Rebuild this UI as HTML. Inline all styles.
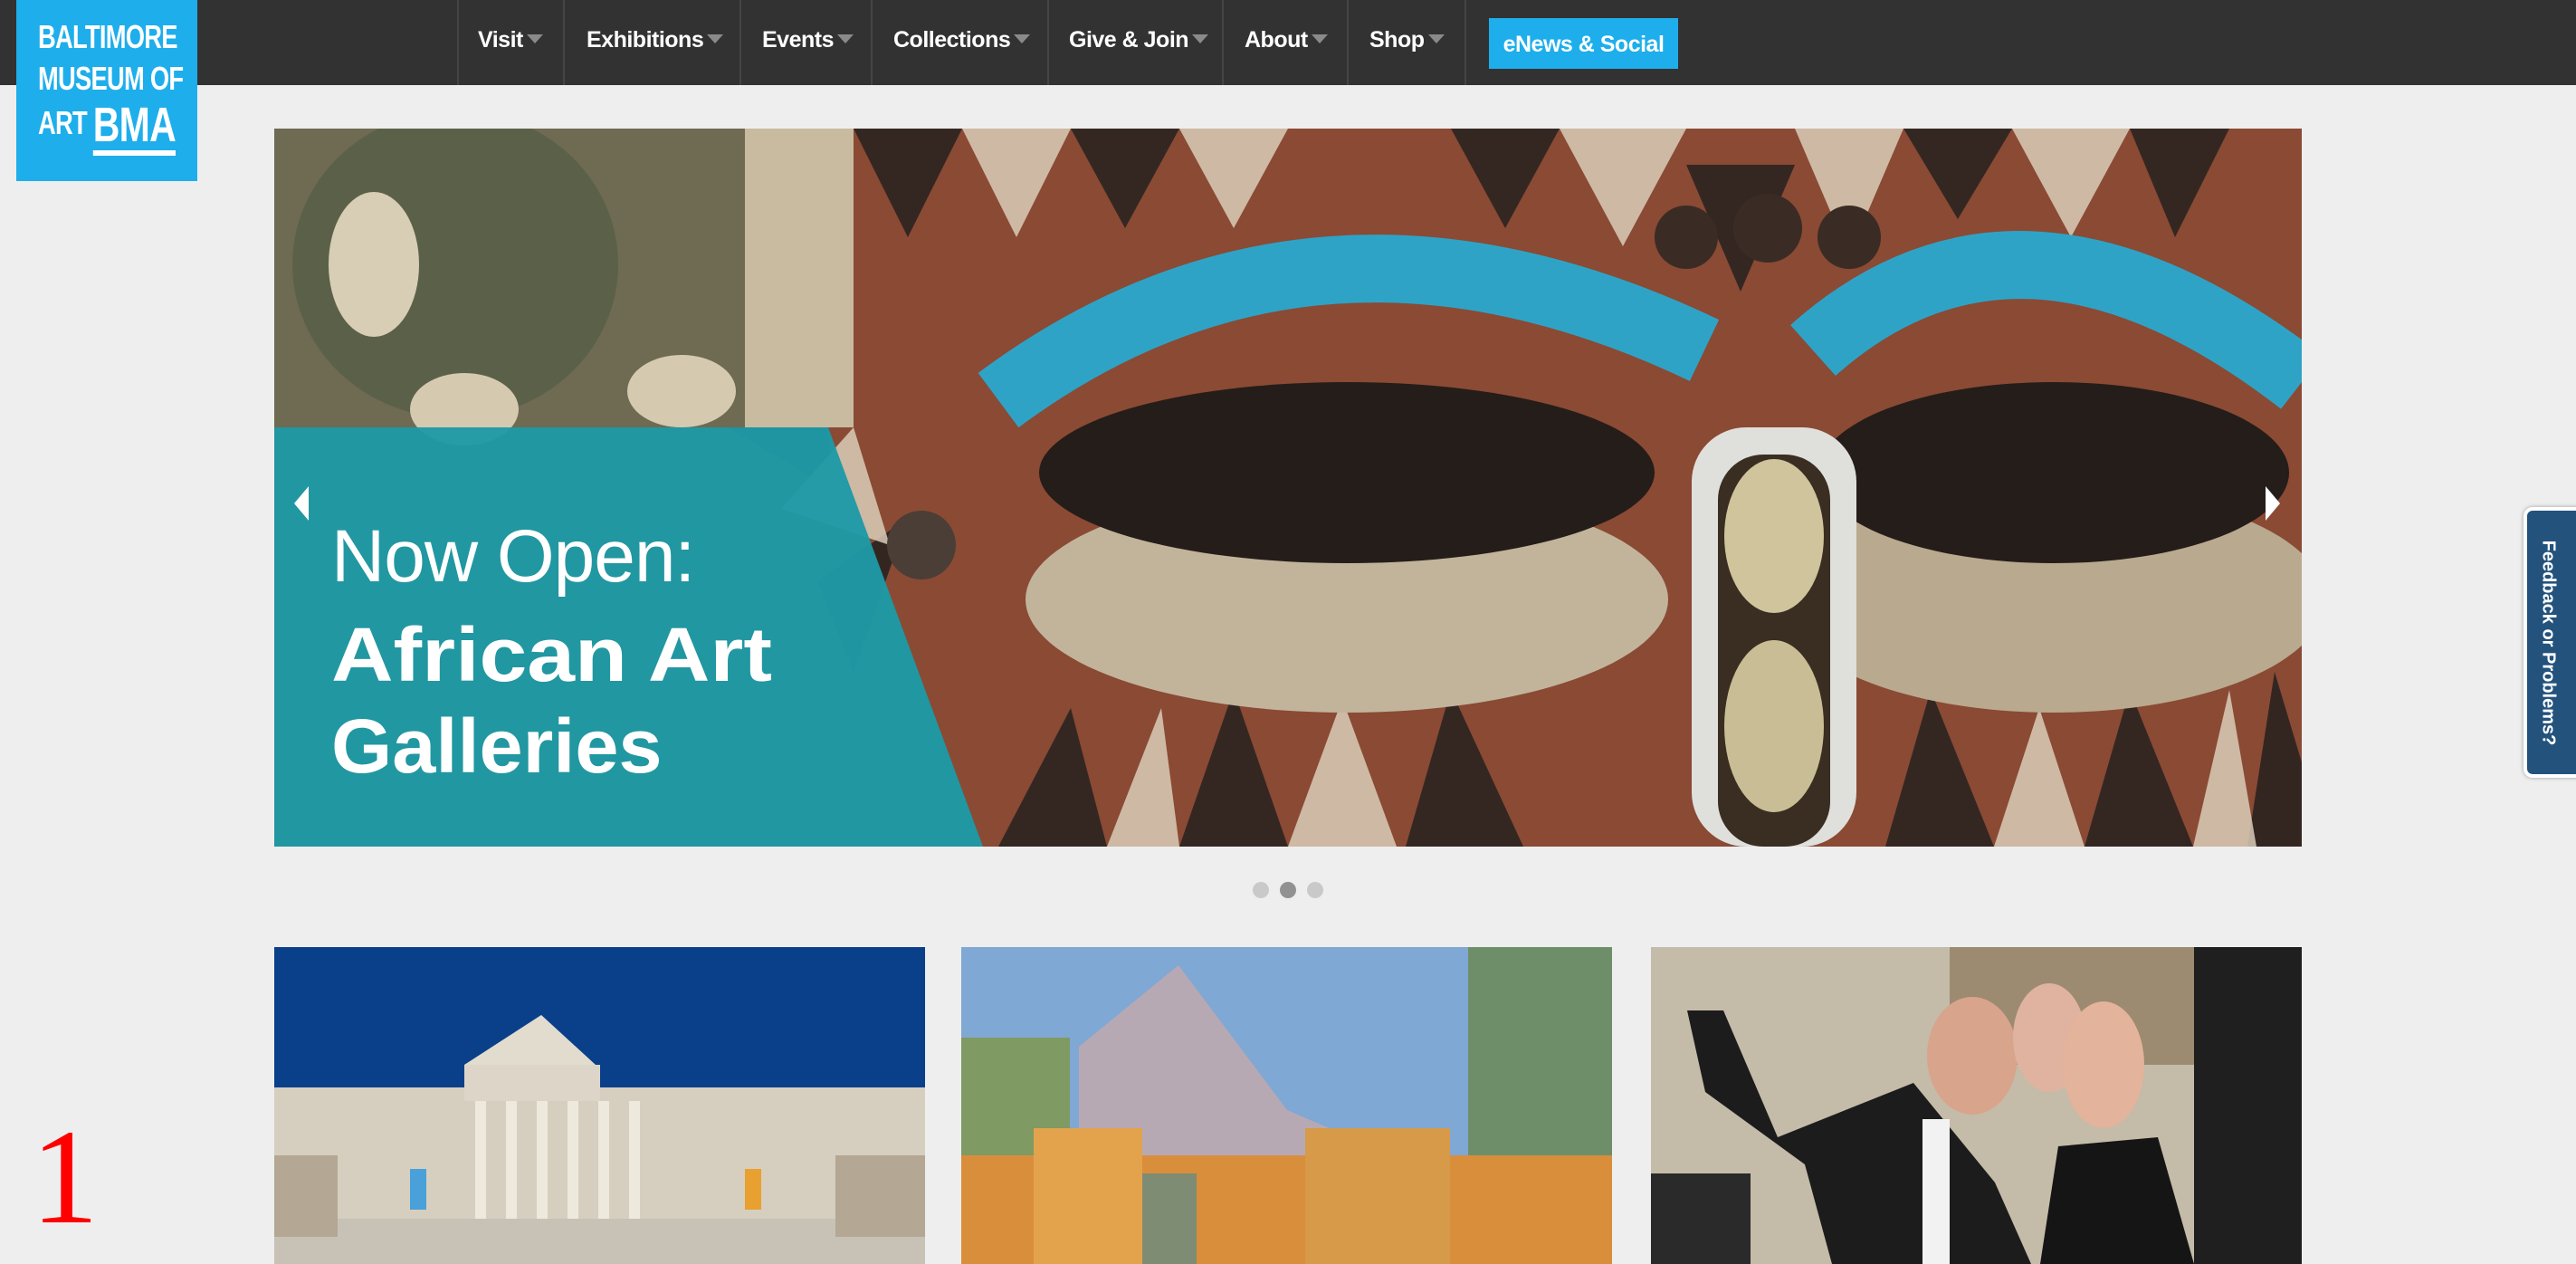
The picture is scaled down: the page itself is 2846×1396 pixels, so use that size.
<!DOCTYPE html>
<html><head><meta charset="utf-8"><style>
*{margin:0;padding:0;box-sizing:border-box}
body{width:2846px;height:1396px;background:#eeeeee;position:relative;overflow:hidden;font-family:"Liberation Sans",sans-serif}
.nav{position:absolute;left:0;top:0;width:2846px;height:94px;background:#323232}
.logo{position:absolute;left:18px;top:0;width:200px;height:200px;background:#1eaeec;overflow:hidden}
.logo .in{position:absolute;left:24px;top:18px;color:#fff;font-weight:bold;font-size:36px;line-height:46px;letter-spacing:-1px;transform:scaleX(0.76);transform-origin:0 0}
.logo span{display:block;white-space:nowrap}
.sep{position:absolute;top:0;width:2px;height:94px;background:#454545}
.ni{position:absolute;top:30px;color:#fff;font-size:25px;font-weight:bold;letter-spacing:-0.5px;white-space:nowrap}
.ni i{display:inline-block;width:0;height:0;border-left:9px solid transparent;border-right:9px solid transparent;border-top:10px solid #8a8a8a;margin-left:4px;vertical-align:4px}
.btn{position:absolute;left:1645px;top:20px;width:209px;height:56px;background:#1eaeec;color:#fff;font-size:25px;font-weight:bold;text-align:center;line-height:58px;letter-spacing:-0.5px}
.hero{position:absolute;left:303px;top:142px;width:2240px;height:793px;overflow:hidden}
.txt{position:absolute;left:366px;color:#fff;white-space:nowrap}
.dot{position:absolute;top:974px;width:18px;height:18px;border-radius:50%;background:#c9c9c9}
.card{position:absolute;top:1046px;height:350px;overflow:hidden}
.fb{position:absolute;left:2788px;top:560px;width:70px;height:299px;background:#23527c;border:4px solid #fff;border-radius:10px;box-shadow:0 0 4px #999}
.fb span{position:absolute;left:50%;top:50%;transform:translate(-50%,-50%) rotate(90deg);color:#fff;font-weight:bold;font-size:20px;white-space:nowrap;margin-left:-8px}
</style></head><body>
<div class="nav"></div>
<div class="logo"><div class="in"><span>BALTIMORE</span><span>MUSEUM OF</span><span>ART <span style="display:inline-block;font-size:54px;border-bottom:6px solid #fff;line-height:56px;vertical-align:-8px">BMA</span></span></div></div>
<div class="sep" style="left:505px"></div><div class="sep" style="left:622px"></div><div class="sep" style="left:817px"></div><div class="sep" style="left:962px"></div><div class="sep" style="left:1157px"></div><div class="sep" style="left:1350px"></div><div class="sep" style="left:1488px"></div><div class="sep" style="left:1618px"></div>
<div class="ni" style="left:528px">Visit<i></i></div>
<div class="ni" style="left:648px">Exhibitions<i></i></div>
<div class="ni" style="left:842px">Events<i></i></div>
<div class="ni" style="left:987px">Collections<i></i></div>
<div class="ni" style="left:1181px">Give &amp; Join<i></i></div>
<div class="ni" style="left:1375px">About<i></i></div>
<div class="ni" style="left:1513px">Shop<i></i></div>
<div class="btn">eNews &amp; Social</div>

<div class="hero">
<svg width="2240" height="793" viewBox="0 0 2240 793">
<rect width="2240" height="793" fill="#8a4a34"/>
<g fill="#2a2320" opacity=".9">
<polygon points="640,0 760,0 700,120"/><polygon points="880,0 1000,0 940,110"/><polygon points="1300,0 1420,0 1360,110"/><polygon points="1560,40 1680,40 1620,180"/><polygon points="1800,0 1920,0 1860,100"/><polygon points="2050,0 2160,0 2100,120"/>
<polygon points="500,330 600,240 620,400"/><polygon points="600,500 700,430 640,600"/>
<polygon points="1000,793 1060,620 1120,793"/><polygon points="1250,793 1300,620 1380,793"/><polygon points="800,793 880,640 920,793"/>
<polygon points="1780,793 1830,620 1900,793"/><polygon points="2000,793 2050,620 2120,793"/><polygon points="2180,793 2210,600 2240,700 2240,793"/>
</g>
<g fill="#d9cdb8" opacity=".85">
<polygon points="760,0 880,0 820,120"/><polygon points="1000,0 1120,0 1060,110"/><polygon points="1420,0 1560,0 1490,130"/><polygon points="1680,0 1800,0 1740,140"/><polygon points="1920,0 2050,0 1985,120"/>
<polygon points="560,420 640,330 680,460"/><polygon points="1120,793 1180,630 1240,793"/><polygon points="920,793 980,640 1000,793"/><polygon points="1900,793 1950,640 2000,793"/><polygon points="2120,793 2160,620 2190,793"/>
</g>
<rect x="0" y="0" width="640" height="330" fill="#6f6a52"/>
<ellipse cx="200" cy="150" rx="180" ry="170" fill="#5b6148"/>
<ellipse cx="110" cy="150" rx="50" ry="80" fill="#d8cdb5"/><ellipse cx="210" cy="310" rx="60" ry="40" fill="#d5c9b0"/><ellipse cx="450" cy="290" rx="60" ry="40" fill="#d5c9b0"/>
<rect x="520" y="0" width="120" height="330" fill="#c9bba0"/>
<ellipse cx="1185" cy="520" rx="355" ry="125" fill="#c2b49b"/>
<ellipse cx="1966" cy="520" rx="300" ry="125" fill="#b9a98f"/>
<ellipse cx="1185" cy="380" rx="340" ry="100" fill="#251d19"/>
<ellipse cx="1966" cy="380" rx="260" ry="100" fill="#251d19"/>
<path d="M800,300 Q1150,40 1580,245" stroke="#2fa3c6" stroke-width="75" fill="none"/>
<path d="M1700,245 Q1930,40 2240,280" stroke="#2fa3c6" stroke-width="75" fill="none"/>
<circle cx="1560" cy="120" r="35" fill="#3a2c24"/><circle cx="1650" cy="110" r="38" fill="#3a2c24"/><circle cx="1740" cy="120" r="35" fill="#3a2c24"/>
<circle cx="715" cy="460" r="38" fill="#4a3e36"/>
<rect x="1566" y="330" width="182" height="463" rx="60" fill="#dfe0dc"/>
<rect x="1595" y="360" width="124" height="433" rx="50" fill="#3a2e22"/>
<ellipse cx="1657" cy="450" rx="55" ry="85" fill="#cfc49c"/><ellipse cx="1657" cy="660" rx="55" ry="95" fill="#c9bd95"/>
<polygon points="0,330 612,330 783,793 0,793" fill="#1d9aa6" opacity=".96"/>
</svg>
<div style="position:absolute;left:22px;top:395px;width:0;height:0;border-top:19px solid transparent;border-bottom:19px solid transparent;border-right:16px solid #fff"></div>
<div style="position:absolute;left:2200px;top:395px;width:0;height:0;border-top:19px solid transparent;border-bottom:19px solid transparent;border-left:16px solid #fff"></div>
</div>
<div class="txt" style="top:568px;font-size:82px;font-weight:300;letter-spacing:-1px">Now Open:</div>
<div class="txt" style="top:675px;font-size:84px;font-weight:bold;transform:scaleX(1.13);transform-origin:0 0">African Art</div>
<div class="txt" style="top:776px;font-size:84px;font-weight:bold;transform:scaleX(1.03);transform-origin:0 0">Galleries</div>

<div class="dot" style="left:1384px"></div><div class="dot" style="left:1414px;background:#919191"></div><div class="dot" style="left:1444px"></div>

<div class="card" style="left:303px;width:719px">
<svg width="719" height="350" viewBox="0 0 719 350">
<rect width="719" height="160" fill="#0a3f8a"/>
<rect y="155" width="719" height="195" fill="#d6cfc0"/>
<polygon points="210,130 295,75 355,130" fill="#e2dccf"/>
<rect x="210" y="130" width="150" height="40" fill="#ddd6c8"/>
<g fill="#eee9dd"><rect x="222" y="170" width="12" height="140"/><rect x="256" y="170" width="12" height="140"/><rect x="290" y="170" width="12" height="140"/><rect x="324" y="170" width="12" height="140"/><rect x="358" y="170" width="12" height="140"/><rect x="392" y="170" width="12" height="140"/></g>
<rect x="150" y="245" width="18" height="45" fill="#4aa0d8"/><rect x="520" y="245" width="18" height="45" fill="#e8a030"/>
<rect y="300" width="719" height="50" fill="#c8c2b6"/>
<rect x="0" y="230" width="70" height="90" fill="#b4a793"/><rect x="620" y="230" width="99" height="90" fill="#b4a793"/>
</svg></div>
<div class="card" style="left:1062px;width:719px">
<svg width="719" height="350" viewBox="0 0 719 350">
<rect width="719" height="350" fill="#7fa8d4"/>
<polygon points="130,110 240,20 360,180 430,210 460,260 130,260" fill="#b7a9b4"/>
<rect x="0" y="100" width="120" height="250" fill="#7f9a62"/>
<rect x="560" y="0" width="159" height="350" fill="#6e8e6a"/>
<rect x="0" y="230" width="719" height="120" fill="#d98e3c"/>
<rect x="80" y="200" width="120" height="150" fill="#e3a24c"/><rect x="380" y="200" width="160" height="150" fill="#d79a48"/>
<rect x="200" y="250" width="60" height="100" fill="#7e8c73"/>
</svg></div>
<div class="card" style="left:1824px;width:719px">
<svg width="719" height="350" viewBox="0 0 719 350">
<rect width="719" height="350" fill="#c4bba9"/>
<rect x="330" y="0" width="389" height="130" fill="#9c8b70"/>
<rect x="0" y="250" width="110" height="100" fill="#2a2a2a"/>
<polygon points="40,70 80,70 140,210 290,150 380,260 420,350 200,350 170,240 60,160" fill="#1c1c1c"/>
<ellipse cx="355" cy="120" rx="50" ry="65" fill="#d9a48c"/>
<ellipse cx="440" cy="100" rx="40" ry="60" fill="#e0b3a0"/>
<ellipse cx="500" cy="130" rx="45" ry="70" fill="#e3b39b"/>
<polygon points="450,220 560,210 600,350 430,350" fill="#151515"/>
<rect x="600" y="0" width="119" height="350" fill="#1f1f1f"/>
<rect x="300" y="190" width="30" height="160" fill="#f2f2f2"/>
</svg></div>

<div style="position:absolute;left:34px;top:1225px;color:#f00;font-family:'Liberation Serif',serif;font-size:150px;line-height:150px">1</div>
<div class="fb"><span>Feedback or Problems?</span></div>
</body></html>
